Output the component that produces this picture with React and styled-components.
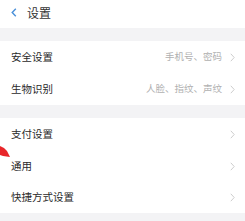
import React from "react";
import styled, { createGlobalStyle } from "styled-components";

const Global = createGlobalStyle`
  html, body { margin: 0; padding: 0; background: #f3f3f5; }
  body { font-family: "Noto Sans CJK SC", "Noto Sans", sans-serif; width: 245px; height: 221px; overflow: hidden; }
`;

const Page = styled.div`
  position: relative;
  width: 245px;
  height: 221px;
  background: #f3f3f5;
  display: flex;
  flex-direction: column;
  gap: 13px;
`;

const Header = styled.div`
  height: 28px;
  background: #fff;
  display: flex;
  align-items: center;
  padding: 0 0 3px 11px;
  box-sizing: border-box;
  gap: 10px;
`;

const Title = styled.span`
  font-size: 12px;
  color: #333;
  line-height: 1;
`;

const Section = styled.div`
  background: #fff;
  display: flex;
  flex-direction: column;
`;

const Row = styled.div`
  height: ${(p) => p.$h}px;
  display: flex;
  align-items: center;
  padding: 0 10px 0 11px;
`;

const Label = styled.span`
  flex: 1;
  font-size: 10.5px;
  color: #2a2a2a;
  line-height: 1;
`;

const Value = styled.span`
  font-size: 9.5px;
  color: #b0b0b0;
  line-height: 1;
  margin-right: 8px;
`;

const Arrow = styled.svg`
  position: absolute;
  left: 0;
  top: 144px;
`;

const Chevron = () => (
  <svg width="5" height="9" viewBox="0 0 5 9">
    <path d="M0.8 0.8 L4.2 4.5 L0.8 8.2" fill="none" stroke="#cdcdcd" strokeWidth="1" />
  </svg>
);

const Back = () => (
  <svg width="6" height="9" viewBox="0 0 6 9">
    <path d="M4.8 0.8 L1.2 4.5 L4.8 8.2" fill="none" stroke="#4a90d9" strokeWidth="1.4" />
  </svg>
);

const rows1 = [
  { label: "安全设置", value: "手机号、密码", h: 32 },
  { label: "生物识别", value: "人脸、指纹、声纹", h: 32 },
];
const rows2 = [
  { label: "支付设置", h: 32 },
  { label: "通用", h: 32 },
  { label: "快捷方式设置", h: 31 },
];

export default function App() {
  return (
    <>
      <Global />
      <Page>
        <Header>
          <Back />
          <Title>设置</Title>
        </Header>
        <Section>
          {rows1.map((r) => (
            <Row key={r.label} $h={r.h}>
              <Label>{r.label}</Label>
              {r.value && <Value>{r.value}</Value>}
              <Chevron />
            </Row>
          ))}
        </Section>
        <Section>
          {rows2.map((r) => (
            <Row key={r.label} $h={r.h}>
              <Label>{r.label}</Label>
              {r.value && <Value>{r.value}</Value>}
              <Chevron />
            </Row>
          ))}
        </Section>
        <Arrow width="14" height="16" viewBox="0 0 14 16">
          <polygon points="0,2 4,4 7,7 10,13 3,12 0,11" fill="#e8262a" />
        </Arrow>
      </Page>
    </>
  );
}
